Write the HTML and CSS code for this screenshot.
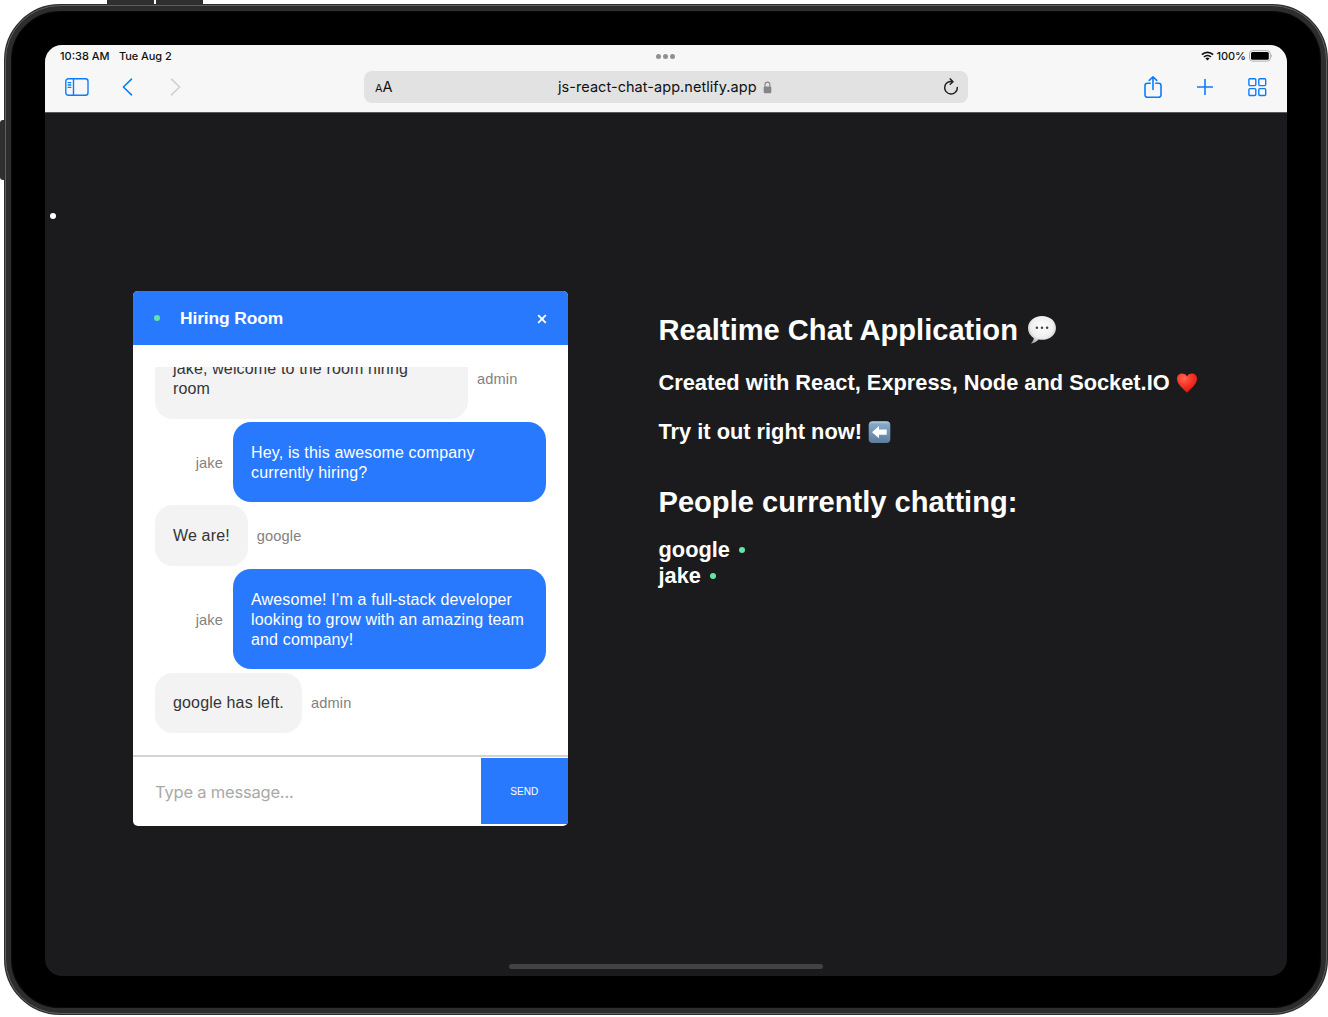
FILE: index.html
```html
<!DOCTYPE html>
<html lang="en">
<head>
<meta charset="utf-8">
<title>Realtime Chat Application</title>
<link rel="stylesheet" href="styles.css">
</head>
<body>
<span class="key key-up"></span><span class="key key-down"></span><span class="key key-power"></span>
<div class="device">
  <div class="screen">
    <header class="browser">
      <div class="status">
        <span class="clock">10:38 AM</span><span class="date">Tue Aug 2</span>
        <span class="dots"><i></i><i></i><i></i></span>
        <span class="system">
          <svg width="13" height="10" viewBox="0 0 13 10"><g fill="none" stroke="#111" stroke-width="1.7"><path d="M.9 3.7a8 8 0 0 1 11.2 0"/><path d="M3 6a5 5 0 0 1 7 0"/></g><path d="M6.500 9.500 4.500 7.400a2.900 2.900 0 0 1 4 0z" fill="#111"/></svg>
          <span class="percent">100%</span>
          <svg width="24" height="12" viewBox="0 0 24 12"><rect x=".5" y=".7" width="20.800" height="10.400" rx="3" fill="#fff" stroke="#aaa"/><rect x="2" y="2.100" width="17.800" height="7.600" rx="1.500"/><path d="M22.400 4q1.400 1.900 0 3.800z" fill="#999"/></svg>
        </span>
      </div>
      <div class="toolbar">
        <div class="tools left">
          <svg width="24" height="18" viewBox="0 0 24 18" class="blue thin"><rect x=".8" y=".8" width="22.200" height="16.400" rx="2.500"/><path d="M8.500 1v16M3.200 4.600h2.600M3.200 7h2.600M3.200 9.400h2.600"/></svg>
          <svg width="11" height="18" viewBox="0 0 11 18" class="blue back"><path d="M9.500 1.200 1.400 9l8.100 7.800"/></svg>
          <svg width="11" height="18" viewBox="0 0 11 18" class="forward"><path d="M1.500 1.200 9.600 9l-8.100 7.800"/></svg>
        </div>
        <div class="address">
          <span class="reader"><small>A</small>A</span>
          <span class="url">js-react-chat-app.netlify.app<svg width="9" height="13" viewBox="0 0 9 13"><path d="M2 6V3.600a2.400 2.400 0 0 1 4.900 0V6" fill="none" stroke="#85858a" stroke-width="1.100"/><rect x=".7" y="5.400" width="7.600" height="6.800" rx="1.200" fill="#85858a"/></svg></span>
          <svg width="16" height="18" viewBox="0 0 16 18" class="reload"><path d="M9.500 3.600A6.300 6.300 0 1 0 14.300 9.600M7.300.9 10 3.700 7.200 6.300"/></svg>
        </div>
        <div class="tools right">
          <svg width="18" height="23" viewBox="0 0 18 23" class="blue"><path d="M6.200 7.300H3.300A2.300 2.300 0 0 0 1 9.600v9.400a2.300 2.300 0 0 0 2.300 2.300h11.400a2.300 2.300 0 0 0 2.300-2.300v-9.400a2.300 2.300 0 0 0-2.300-2.300h-2.900M9 13.500V.9M5.300 4.400 9 .8l3.700 3.600"/></svg>
          <svg width="16" height="16" viewBox="0 0 16 16" class="blue"><path d="M8 .5v15M.5 8h15"/></svg>
          <svg width="19" height="19" viewBox="0 0 19 19" class="blue thin"><rect x=".9" y=".7" width="6.900" height="6.900" rx="1.100"/><rect x="10.800" y=".7" width="6.900" height="6.900" rx="1.100"/><rect x=".9" y="10.600" width="6.900" height="6.900" rx="1.100"/><rect x="10.800" y="10.600" width="6.900" height="6.900" rx="1.100"/></svg>
        </div>
      </div>
    </header>
    <main class="page">
      <span class="marker"></span>
      <section class="chat">
        <div class="chat-head"><i class="online"></i><b>Hiring Room</b><svg width="10" height="10" viewBox="0 0 10 10"><path d="M1.200 1.200l7.600 7.600M8.800 1.200 1.200 8.800"/></svg></div>
        <div class="messages">
          <div class="row"><p class="bubble">jake, welcome to the room hiring<br>room</p><span class="name">admin</span></div>
          <div class="row mine"><span class="name">jake</span><p class="bubble">Hey, is this awesome company<br>currently hiring?</p></div>
          <div class="row"><p class="bubble">We are!</p><span class="name">google</span></div>
          <div class="row mine"><span class="name">jake</span><p class="bubble">Awesome! I’m a full-stack developer<br>looking to grow with an amazing team<br>and company!</p></div>
          <div class="row"><p class="bubble">google has left.</p><span class="name">admin</span></div>
        </div>
        <div class="compose"><span class="placeholder">Type a message...</span><span class="send">SEND</span></div>
      </section>
      <section class="info">
        <h1>Realtime Chat Application <svg class="emoji speech" width="30" height="30" viewBox="0 0 30 30"><defs><radialGradient id="sp" cx=".5" cy=".4" r=".62"><stop offset="0" stop-color="#fff"/><stop offset=".65" stop-color="#eee"/><stop offset="1" stop-color="#aaa"/></radialGradient></defs><path d="M15 1C7.200 1 1 6.100 1 13c0 4.600 2.300 8 5.800 10.200-.3 2.100-1.300 3.800-2.900 5.200 3.200-.3 5.700-1.800 7.600-4 1.200.3 2.300.4 3.500.4 7.800 0 14-5 14-11.900S22.800 1 15 1z" fill="url(#sp)"/><g fill="#444"><circle cx="9.900" cy="12.800" r="1.250"/><circle cx="15" cy="12.800" r="1.250"/><circle cx="20.100" cy="12.800" r="1.250"/></g></svg></h1>
        <h2>Created with React, Express, Node and Socket.IO <svg class="emoji heart" width="22" height="22" viewBox="0 0 22 22"><defs><radialGradient id="ht" cx=".35" cy=".25" r=".8"><stop offset="0" stop-color="#ff6a55"/><stop offset=".4" stop-color="#fb3a2b"/><stop offset="1" stop-color="#d51710"/></radialGradient></defs><path d="M11 20.800C8 17.400 1 12.600 1 6.800 1 3.600 3.200 1.500 6 1.500c2.300 0 4.200 1.200 5 3.100.8-1.900 2.700-3.100 5-3.100 2.800 0 5 2.100 5 5.300 0 5.800-7 10.600-10 14z" fill="url(#ht)"/></svg></h2>
        <h2>Try it out right now! <svg class="emoji arrow" width="23" height="23" viewBox="0 0 23 23"><defs><linearGradient id="ar" x2="0" y2="1"><stop offset="0" stop-color="#c2d9e9"/><stop offset=".12" stop-color="#86a9c8"/><stop offset="1" stop-color="#5d7d9c"/></linearGradient></defs><rect x=".7" y=".3" width="21.600" height="21.800" rx="4" fill="url(#ar)"/><path d="M4 11.200 11 5.100v3.500h7.700v5.200H11v3.500z" fill="#fff"/></svg></h2>
        <h1 class="people">People currently chatting:</h1>
        <h2 class="person">google<i class="online"></i></h2>
        <h2 class="person">jake<i class="online"></i></h2>
      </section>
      <span class="home"></span>
    </main>
  </div>
</div>
</body>
</html>
```
FILE: styles.css
```css
* { box-sizing: border-box; }
body { margin: 0; width: 1328px; height: 1017px; overflow: hidden; background: #fff; padding: 4px 0 2px 4px; position: relative; font-family: "Liberation Sans", Arial, sans-serif; }
svg { display: block; flex: none; }
.key { position: absolute; background: #2f2f30; }
.key-up { left: 107px; top: 0; width: 47px; height: 6px; }
.key-down { left: 156px; top: 0; width: 47px; height: 6px; }
.key-power { left: 0; top: 120px; width: 6px; height: 60px; border-radius: 3px 0 0 3px; }
.device { position: relative; width: 1324px; height: 1011px; border: 7px solid #2d2d2e; border-radius: 56px; background: #000; padding: 34px; box-shadow: inset 0 0 2px #222; }
.device::before { content: ""; position: absolute; inset: -6px; border: 1px solid #606062; border-radius: 55px; }
.screen { width: 1242px; height: 931px; border-radius: 17px; overflow: hidden; background: #1b1b1d; display: flex; flex-direction: column; }
.browser { height: 67px; background: #f7f7f7; font-family: Inter, sans-serif; color: #111; }
.status { height: 22px; display: flex; align-items: center; position: relative; padding: 0 14px 1px 15px; font-size: 11px; font-weight: 500; }
.clock { width: 59px; white-space: nowrap; }
.date { white-space: nowrap; letter-spacing: -.08px; }
.dots { display: flex; gap: 2px; position: absolute; left: 611px; top: 9px; }
.dots i { width: 5px; height: 5px; border-radius: 50%; background: #909092; }
.system { margin-left: auto; display: flex; align-items: center; gap: 3px; }
.percent { letter-spacing: -.05px; }
.toolbar { height: 40px; display: flex; align-items: center; }
.tools { display: flex; align-items: center; }
.left { width: 319px; padding-left: 20px; }
.back { margin-left: 33px; }
.forward { margin-left: 37px; }
.right { margin-left: auto; padding-right: 20px; gap: 35px; }
.blue, .forward, .reload { fill: none; stroke: #0a7cff; stroke-width: 1.6; stroke-linecap: round; stroke-linejoin: round; }
.thin { stroke-width: 1.4; }
.forward { stroke: #d0d0d2; }
.reload { stroke: #222; stroke-width: 1.5; }
.address { width: 604px; height: 32px; border-radius: 8px; background: #e2e2e3; display: flex; align-items: center; justify-content: space-between; padding: 0 9px 0 11px; font-size: 14.500px; }
.reader { padding-bottom: 1px; }
.reader small { font-size: 11px; }
.url { display: flex; align-items: center; gap: 6px; padding: 0 6px 2px 0; letter-spacing: .05px; }
.url svg { position: relative; top: 1px; }
.page { flex: 1; display: flex; position: relative; padding: 178px 0 0 88px; border-top: 1px solid #59595b; }
.marker { position: absolute; left: 5px; top: 100px; width: 6px; height: 6px; border-radius: 50%; background: #fff; }
.chat { width: 435px; height: 535px; background: #fff; border-radius: 5px; overflow: hidden; display: flex; flex-direction: column; }
.chat-head { height: 54px; background: #2979ff; color: #fff; display: flex; align-items: center; padding: 0 21px 0 21px; font-size: 17.400px; letter-spacing: -.1px; }
.chat-head b { margin-left: 20px; }
.chat-head svg { margin-left: auto; stroke: #fff; stroke-width: 1.900; position: relative; top: 1px; }
.online { display: inline-block; width: 6px; height: 6px; border-radius: 50%; background: #5fe8a2; }
.messages { height: 366px; margin: 22px 22px 22px 22px; overflow: hidden; display: flex; flex-direction: column; justify-content: flex-end; gap: 3.100px; font-size: 16px; line-height: 20px; letter-spacing: .15px; }
.row { display: flex; align-items: center; flex: none; }
.mine { justify-content: flex-end; }
.bubble { margin: 0; max-width: 313px; padding: 20.800px 18px 19.700px; border-radius: 18px; background: #f3f3f3; color: #353535; white-space: nowrap; }
.row:first-child .bubble, .mine .bubble { width: 313px; }
.mine .bubble { background: #2979ff; color: #fff; }
.name { color: #828282; font-size: 14.600px; margin: 1px 9px 0; }
.mine .name { margin-right: 10px; }
.compose { height: 71px; border-top: 2px solid #d3d3d3; display: flex; padding: 1px 0 2px; }
.placeholder { flex: 1; padding-left: 22px; font: 16.500px/69px Inter, sans-serif; letter-spacing: -.2px; color: #a9a9a9; }
.send { width: 87.500px; background: #2979ff; color: #fff; font-size: 10px; line-height: 68px; text-align: center; }
.info { margin-left: 90.500px; padding-top: 22px; color: #fff; white-space: nowrap; }
h1, h2 { margin: 0; display: flex; align-items: center; }
h1 { font-size: 29.100px; line-height: 34px; height: 34px; }
h2 { font-size: 21.800px; line-height: 26px; height: 26px; margin-top: 23px; }
h1 .emoji { margin-left: 9px; }
h2 .emoji { margin-left: 6px; }
h1.people { margin-top: 40px; }
.person { margin-top: 0; }
.people + .person { margin-top: 18px; }
.person .online { margin-left: 9px; }
.home { position: absolute; left: 464px; bottom: 7px; width: 314px; height: 5px; border-radius: 3px; background: #424244; }
```
